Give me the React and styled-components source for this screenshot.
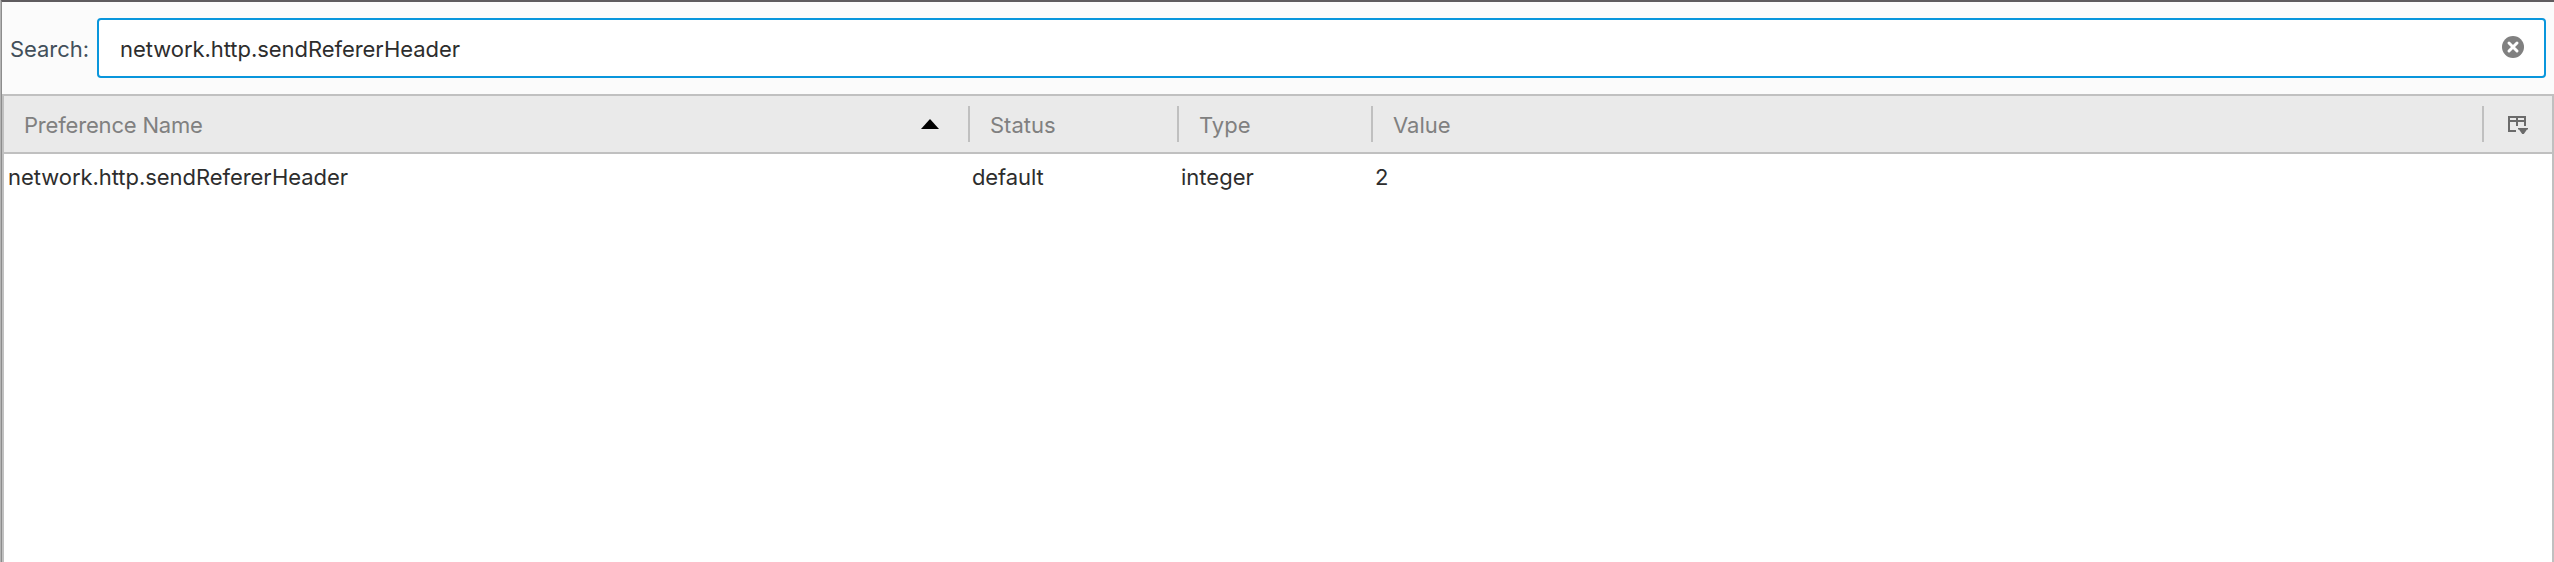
import React from "react";
import styled, { createGlobalStyle } from "styled-components";

const Global = createGlobalStyle`
  * { box-sizing: border-box; }
  body { margin: 0; background: #fff; font-family: Inter, "Liberation Sans", sans-serif; font-size: 22px; font-weight: 430; line-height: 28px; overflow: hidden; }
`;
const Window = styled.div`
  display: flex; flex-direction: column; width: 2554px; height: 562px;
  border-left: 1px solid #b4b4b4; background: #fbfbfb;
`;
const Body = styled.div`
  flex: 1; display: flex; flex-direction: column;
  border-left: 1px solid #8c8c8c; border-top: 2px solid #5f5c5f;
`;
const SearchBar = styled.label`
  display: flex; align-items: center; height: 92px; padding: 0 8px 0 8px; color: #424f5a;
`;
const Text = styled.span`
  display: block; white-space: nowrap; letter-spacing: ${(p) => p.$track || 0}px;
`;
const Caption = styled.div`width: 87px; flex: none; padding-top: 2px;`;
const Field = styled.div`
  flex: 1; height: 60px; display: flex; align-items: center; justify-content: space-between;
  border: 2px solid #0996dc; border-radius: 4px; background: #fff; color: #2d2d2d; padding: 0 20px 0 21px;
  ${Text} { padding-top: 2px; }
`;
const ClearIcon = styled.svg`width: 22px; height: 22px; display: block; margin-bottom: 2px;`;
const Tree = styled.div`
  flex: 1; border: 2px solid #c0c0c0; border-bottom: 0; background: #fff;
`;
const columns = "964px 209px 194px 1111px 1fr";
const HeaderRow = styled.div`
  display: grid; grid-template-columns: ${columns}; align-items: center; height: 58px;
  background: #eaeaea; border-bottom: 2px solid #c0c0c0; color: #808080;
`;
const HeaderCell = styled.div`
  height: 36px; display: flex; align-items: center; justify-content: space-between;
  padding: 0 29px 0 20px;
  border-left: ${(p) => (p.$first ? 0 : 2)}px solid #c0c0c0;
  ${Text} { padding-top: 2px; }
`;
const SortArrow = styled.svg`width: 18px; height: 10px; display: block;`;
const PickerIcon = styled.svg`width: 22px; height: 20px; display: block; margin-left: 4px;`;
const DataRow = styled.div`
  display: grid; grid-template-columns: ${columns}; align-items: center; height: 46px; color: #2d2d2d;
`;
const Cell = styled.div`padding-left: 4px;`;

export default function App() {
  return (
    <Window>
      <Global />
      <Body>
        <SearchBar>
          <Caption><Text $track={-0.05}>Search:</Text></Caption>
          <Field>
            <Text $track={-0.05}>network.http.sendRefererHeader</Text>
            <ClearIcon viewBox="0 0 22 22">
              <circle cx="11" cy="11" r="11" fill="#808080" />
              <path d="M7 7l8 8M15 7l-8 8" stroke="#fff" strokeWidth="3" strokeLinecap="round" />
            </ClearIcon>
          </Field>
        </SearchBar>
        <Tree>
          <HeaderRow>
            <HeaderCell $first>
              <Text $track={-0.18}>Preference Name</Text>
              <SortArrow viewBox="0 0 18 10"><path d="M9 0l9 10H0z" fill="#000" /></SortArrow>
            </HeaderCell>
            <HeaderCell><Text>Status</Text></HeaderCell>
            <HeaderCell><Text>Type</Text></HeaderCell>
            <HeaderCell><Text>Value</Text></HeaderCell>
            <HeaderCell>
              <PickerIcon viewBox="0 0 22 20">
                <path d="M8 17H1V3h16v9M1 7h16M9 3v9" fill="none" stroke="#6b6b6b" strokeWidth="2" />
                <path d="M10 14h10v1.5h-1L15.8 20h-1.6L11 15.5h-1z" fill="#6b6b6b" />
              </PickerIcon>
            </HeaderCell>
          </HeaderRow>
          <DataRow>
            <Cell><Text $track={-0.05}>network.http.sendRefererHeader</Text></Cell>
            <Cell><Text $track={-0.1}>default</Text></Cell>
            <Cell><Text>integer</Text></Cell>
            <Cell><Text>2</Text></Cell>
          </DataRow>
        </Tree>
      </Body>
    </Window>
  );
}
